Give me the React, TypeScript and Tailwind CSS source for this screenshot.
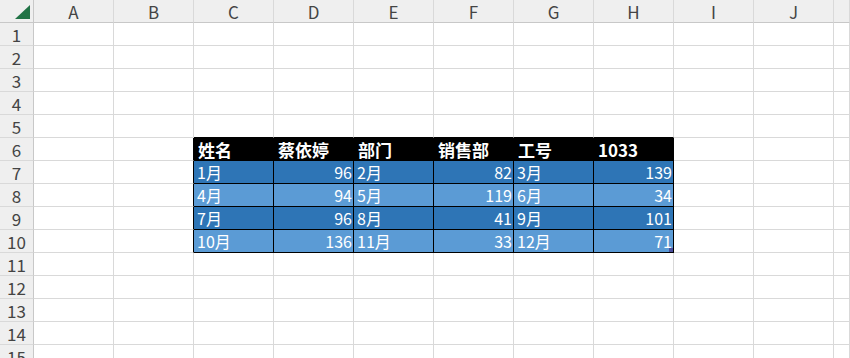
import React from "react";

const cols = ["A", "B", "C", "D", "E", "F", "G", "H", "I", "J", ""];
const rows = Array.from({ length: 15 }, (_, i) => i + 1);

const table: (string | number)[][] = [
    ["姓名", "蔡依婷", "部门", "销售部", "工号", "1033"],
    ["1月", 96, "2月", 82, "3月", 139],
    ["4月", 94, "5月", 119, "6月", 34],
    ["7月", 96, "8月", 41, "9月", 101],
    ["10月", 136, "11月", 33, "12月", 71],
];

const font = { fontFamily: '"Noto Sans CJK SC", "Noto Sans", sans-serif' };

function Cell({ row, col }: { row: number; col: number }) {
    // table lives in rows 6-10, columns C-H (col index 2..7)
    const inTable = row >= 6 && row <= 10 && col >= 2 && col <= 7;
    const w = col === 10 ? "flex-1" : "w-[80px]";

    if (!inTable) {
        const blackBottom = row === 5 && col >= 2 && col <= 7;
        const blackRight = col === 1 && row >= 6 && row <= 10;
        return (
            <div
                className={`${w} h-[23px] shrink-0 border-b border-r ${blackBottom ? "border-b-black" : "border-b-[#d9d9d9]"} ${blackRight ? "border-r-black" : "border-r-[#d9d9d9]"} bg-white`}
            />
        );
    }

    const v = table[row - 6][col - 2];
    const header = row === 6;
    const bg = header ? "bg-black" : row % 2 === 1 ? "bg-[#2e75b6]" : "bg-[#5b9bd5]";
    const isNum = typeof v === "number";
    const last = row === 10 && col === 7;

    return (
        <div
            className={`relative ${w} h-[23px] shrink-0 border-b border-r border-black ${bg} flex items-center overflow-hidden ${isNum ? "justify-end pr-[1px]" : "justify-start pl-[3px]"}`}
        >
            <span className={`text-white leading-none ${header ? "font-bold text-[17px] pl-[1px]" : "text-[16px]"}`}>{v}</span>
            {last && <div className="absolute right-0 bottom-0 w-[4px] h-[4px] bg-[#4b4f9e]" />}
        </div>
    );
}

export default function App() {
    return (
        <div className="w-[850px] h-[358px] overflow-hidden bg-white" style={font}>
            {/* column header row */}
            <div className="flex h-[23px]">
                <div className="w-[34px] h-[23px] shrink-0 bg-[#efefef] border-b border-r border-[#c8c8c8] relative">
                    <svg className="absolute left-[15px] top-[5px]" width="15" height="14" viewBox="0 0 15 14">
                        <polygon points="15,0 15,14 0,14" fill="#217346" />
                    </svg>
                </div>
                {cols.map((c, i) => (
                    <div
                        key={i}
                        className={`${i === 10 ? "flex-1" : "w-[80px]"} h-[23px] shrink-0 bg-[#efefef] border-b border-r border-b-[#c8c8c8] border-r-[#d9d9d9] flex items-center justify-center text-[17px] leading-none text-[#444]`}
                    >
                        {c}
                    </div>
                ))}
            </div>
            {rows.map((r) => (
                <div key={r} className="flex h-[23px]">
                    <div className="w-[34px] h-[23px] shrink-0 bg-[#efefef] border-b border-r border-b-[#d9d9d9] border-r-[#c8c8c8] flex items-center justify-center text-[17px] leading-none text-[#444]">
                        {r}
                    </div>
                    {cols.map((_, ci) => (
                        <Cell key={ci} row={r} col={ci} />
                    ))}
                </div>
            ))}
        </div>
    );
}
